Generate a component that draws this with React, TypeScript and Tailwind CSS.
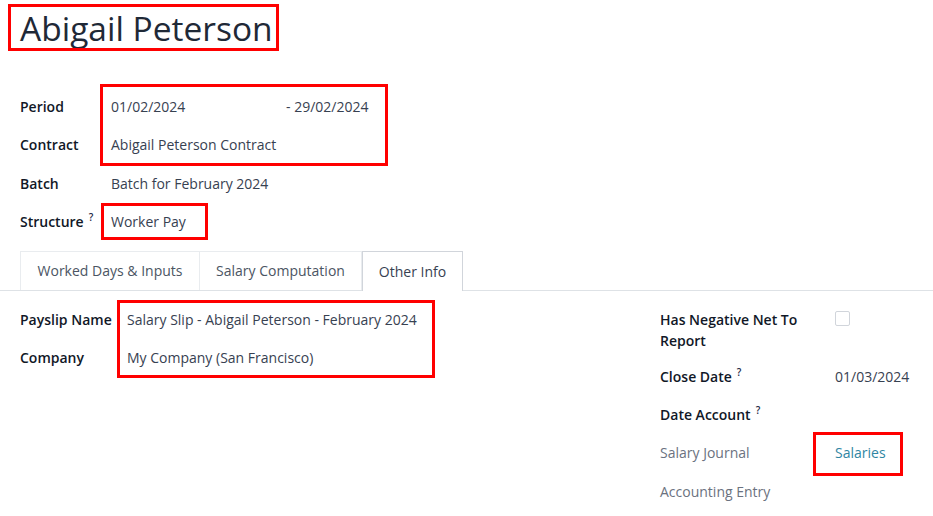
import React from "react";

function Help() {
  return <sup className="ml-[5px] text-[10px] font-semibold text-[#1f2a44] top-[-0.6em]">?</sup>;
}

function Row({ label, children, labelW }: { label: React.ReactNode; children?: React.ReactNode; labelW: string }) {
  return (
    <div className="flex items-start pb-[17.3px] leading-[21px]">
      <div className={`${labelW} flex-none font-semibold text-[#111827]`}>{label}</div>
      <div className="flex-1 text-[#374151]">{children}</div>
    </div>
  );
}

export default function App() {
  return (
    <div className="relative w-[933px] h-[516px] bg-white overflow-hidden font-['Open_Sans',sans-serif] text-[14px]">
      {/* Title */}
      <div className="pl-5 pt-[5px]">
        <h1 className="text-[33.5px] leading-[46px] text-[#1f2937] font-normal">Abigail Peterson</h1>
      </div>

      {/* Main fields */}
      <div className="pl-5 mt-[45px]">
        <div className="flex items-start pb-[17.3px] leading-[21px]">
          <div className="w-[91px] flex-none font-semibold text-[#111827]">Period</div>
          <div className="flex text-[#374151]">
            <span className="w-[175px]">01/02/2024</span>
            <span>- 29/02/2024</span>
          </div>
        </div>
        <div className="flex items-start pb-[17.3px] leading-[21px]">
          <div className="w-[91px] flex-none font-semibold text-[#111827]">Contract</div>
          <div className="text-[#374151]">Abigail Peterson Contract</div>
        </div>
        <div className="flex items-start pb-[17.3px] leading-[21px]">
          <div className="w-[91px] flex-none font-semibold text-[#111827]">Batch</div>
          <div className="text-[#374151]">Batch for February 2024</div>
        </div>
        <div className="flex items-start leading-[21px]">
          <div className="w-[91px] flex-none font-semibold text-[#111827]">
            Structure
            <Help />
          </div>
          <div className="text-[#374151]">Worker Pay</div>
        </div>
      </div>

      {/* Tabs */}
      <div className="mt-[19px] flex border-b border-[#dee2e6] pl-5">
        <div className="w-[180px] h-[39px] flex items-center justify-center border border-b-0 border-[#e9ecef] text-[#4b5563]">
          Worked Days &amp; Inputs
        </div>
        <div className="w-[162px] h-[39px] flex items-center justify-center border border-l-0 border-b-0 border-[#e9ecef] text-[#4b5563]">
          Salary Computation
        </div>
        <div className="w-[101px] h-[40px] -mb-px flex items-center justify-center border border-b-0 border-[#d1d5db] bg-white text-[#374151]">
          Other Info
        </div>
      </div>

      {/* Other Info content */}
      <div className="flex pt-[18px]">
        <div className="w-[640px] flex-none pl-5">
          <Row label="Payslip Name" labelW="w-[107px]">Salary Slip - Abigail Peterson - February 2024</Row>
          <Row label="Company" labelW="w-[107px]">My Company (San Francisco)</Row>
        </div>
        <div className="flex-1 pl-5">
          <div className="flex items-start pb-[15px] leading-[21px]">
            <div className="w-[175px] flex-none pr-[30px] font-semibold text-[#111827]">Has Negative Net To Report</div>
            <div className="pt-[2px]">
              <div className="w-[15px] h-[15px] border border-[#d1d5db] rounded-[2px] bg-white" />
            </div>
          </div>
          <Row labelW="w-[175px]" label={<>Close Date<Help /></>}>01/03/2024</Row>
          <Row labelW="w-[175px]" label={<>Date Account<Help /></>} />
          <div className="flex items-start pb-[17.3px] leading-[21px]">
            <div className="w-[175px] flex-none text-[#6b7280]">Salary Journal</div>
            <div className="text-[#2f86a3]">Salaries</div>
          </div>
          <div className="flex items-start leading-[21px]">
            <div className="w-[175px] flex-none text-[#6b7280]">Accounting Entry</div>
          </div>
        </div>
      </div>

      {/* Red annotation boxes */}
      <div className="absolute left-[8px] top-[4px] w-[271px] h-[47px] border-[3px] border-[#ff0000]" />
      <div className="absolute left-[100px] top-[84px] w-[288px] h-[82px] border-[3px] border-[#ff0000]" />
      <div className="absolute left-[101px] top-[203px] w-[107px] h-[37px] border-[3px] border-[#ff0000]" />
      <div className="absolute left-[117px] top-[300px] w-[318px] h-[78px] border-[3px] border-[#ff0000]" />
      <div className="absolute left-[813px] top-[432px] w-[90px] h-[44px] border-[3px] border-[#ff0000]" />
    </div>
  );
}
